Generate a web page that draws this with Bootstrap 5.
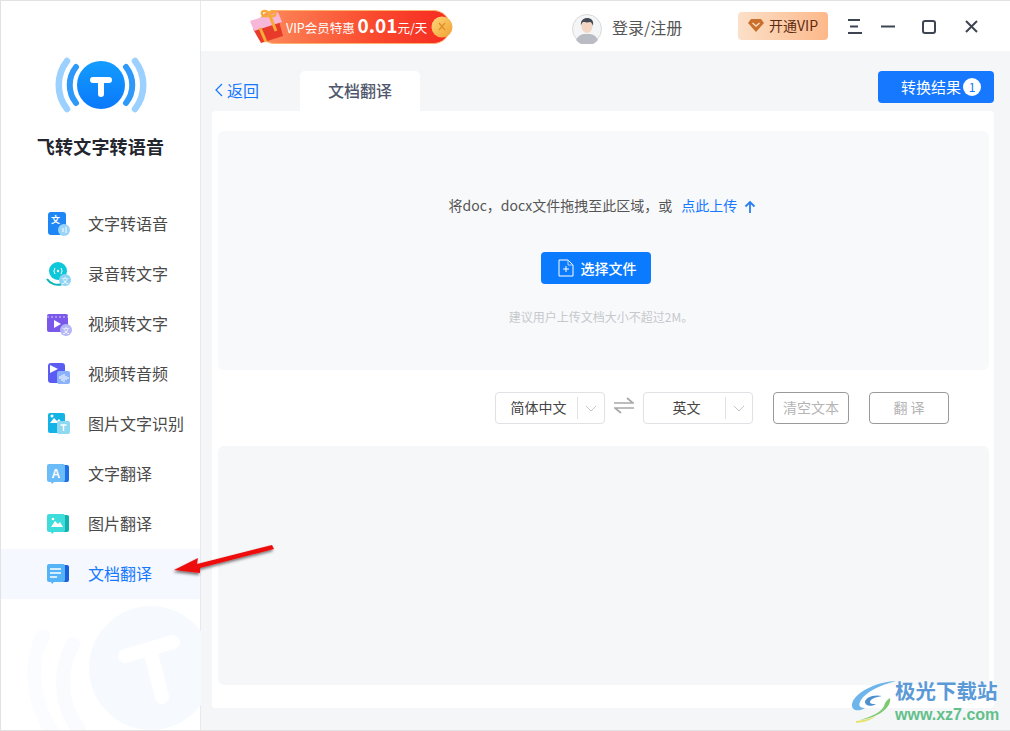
<!DOCTYPE html>
<html lang="zh-CN">
<head>
  <meta charset="UTF-8">
  <meta name="viewport" content="width=device-width, initial-scale=1.0">
  <title>飞转文字转语音</title>
  <link href="https://cdn.jsdelivr.net/npm/bootstrap@5.3.0/dist/css/bootstrap.min.css" rel="stylesheet">
  <style>
    html, body { height: 100%; overflow: hidden; }
    body { font-family: "Noto Sans CJK SC", "Noto Sans", sans-serif; background: #f5f6f8; color: #444; }
    .app-shell { height: 731px; border: 1px solid #e2e2e2; border-right: 0; position: relative; overflow: hidden; }
    .side-bar { width: 200px; flex: none; background: #fff; border-right: 1px solid #e8e9ec; position: relative; }
    .side-logo { padding-top: 57px; height: 198px; }
    .side-title { font-size: 18px; font-weight: 700; color: #23262e; line-height: 26px; margin-top: 19px; letter-spacing: .2px; }
    .side-item { height: 50px; padding: 0 0 2px 45px; font-size: 16px; color: #4a4a4a; gap: 16px; position: relative; z-index: 1; }
    .side-item svg { margin-top: 2px; }
    .side-item.on { background: #f5f9ff; color: #1677ff; }
    .side-mark { position: absolute; left: 0; bottom: 0; }
    .main-area { min-width: 0; }
    .top-bar { height: 50px; background: #fff; position: relative; }
    .promo-pill { position: absolute; left: 49px; top: 7px; }
    .promo-text { font-size: 12.5px; line-height: 25px; color: #fff; }
    .promo-text b { font-size: 19px; font-weight: 700; }
    .user-pic { position: absolute; left: 371px; top: 13px; }
    .login-txt { position: absolute; left: 411px; top: 13px; font-size: 16px; line-height: 26px; color: #555; }
    .vip-btn { position: absolute; left: 537px; top: 11px; width: 90px; height: 28px; padding-bottom: 2px; border-radius: 4px; background: linear-gradient(90deg, #fbe0c8, #fdb88a); color: #5e2a10; font-size: 14px; gap: 5px; }
    .win-btns { position: absolute; left: 646px; top: 16px; }
    .work-area { padding: 20px 16px 22px 11px; }
    .back-link { width: 88px; color: #1677ff; font-size: 16px; padding: 0 0 2px 3px; height: 40px; gap: 4px; text-decoration: none; }
    .tab-on { width: 120px; height: 40px; padding-bottom: 2px; background: #fff; border-radius: 5px 5px 0 0; font-size: 16px; font-weight: 500; color: #50566b; }
    .result-btn { width: 116px; height: 32px; background: #1677ff; border: 0; border-radius: 4px; color: #fff; font-size: 15px; padding: 0 13px 0 23px; }
    .num-dot { width: 18px; height: 18px; border-radius: 50%; background: #fff; color: #1677ff; font-size: 12px; line-height: 18px; text-align: center; }
    .work-panel { background: #fff; border-radius: 4px; padding: 20px 5px 23px 6px; height: 597px; }
    .drop-box { height: 239px; background: #f8f9fb; border-radius: 6px; padding-top: 62px; }
    .drop-line { font-size: 14px; line-height: 24px; color: #555; margin-left: -2px; }
    .drop-line a { color: #1677ff; text-decoration: none; margin-left: 6px; }
    .pick-btn { width: 110px; height: 32px; background: #0a7bff; border: 0; border-radius: 4px; color: #fff; font-size: 14px; font-weight: 500; margin: 35px 16px 0 0; gap: 7px; padding: 0 0 0 3px; }
    .hint-line { font-size: 12px; line-height: 20px; color: #c6c8cc; margin: 23px 5px 0 0; }
    .ctrl-row { height: 76px; padding-right: 40px; }
    .pick-sel { width: 110px; height: 32px; padding-bottom: 2px; border: 1px solid #dfe1e5; border-radius: 4px; font-size: 14px; color: #444; background: #fff; }
    .pick-sel span { flex: 1; text-align: center; padding-left: 4px; }
    .pick-sel i { width: 27px; height: 22px; margin-top: 2px; border-left: 1px solid #dfe1e5; display: flex; align-items: center; justify-content: center; }
    .ghost-btn { height: 32px; border: 1px solid #9a9a9a; border-radius: 4px; background: #fff; color: #b4b4b4; font-size: 14px; padding: 0 0 2px; margin-left: 20px; }
    .btn-clear { width: 76px; }
    .btn-trans { width: 80px; }
    .swap-ico { margin: 0 9px 4px; }
    .out-box { height: 239px; background: #f6f7f9; border-radius: 6px; }
    .red-arrow { position: absolute; left: 0; top: -1px; pointer-events: none; z-index: 5; }
    .wm-box { position: absolute; left: 849px; top: 678px; z-index: 4; }
    .wm-name { position: absolute; left: 45px; top: -3px; font-size: 20.5px; line-height: 28px; font-weight: 700; color: #5b9ad6; white-space: nowrap; }
    .wm-url { position: absolute; left: 45px; top: 26px; font-family: "Liberation Sans", sans-serif; font-size: 16px; line-height: 20px; font-weight: 700; color: #62c08a; white-space: nowrap; }
  </style>
</head>
<body>
  <div class="app-shell d-flex">
    <!-- sidebar -->
    <div class="side-bar">
      <svg class="side-mark" width="200" height="135" viewBox="0 596 200 135">
        <circle cx="150" cy="669" r="62" fill="#f6f9fe"/>
        <path d="M72 645c-16 30-12 62 6 86" fill="none" stroke="#f9fbff" stroke-width="14" stroke-linecap="round"/>
        <path d="M42 637c-16 30-8 70 8 94" fill="none" stroke="#fbfcff" stroke-width="14" stroke-linecap="round"/>
        <path d="M124 657l48-14M149 651l12 47" fill="none" stroke="#fff" stroke-width="14" stroke-linecap="round"/>
      </svg>
      <div class="side-logo text-center">
        <svg width="90" height="56" viewBox="0 0 90 56" class="d-block mx-auto" style="overflow:visible">
          <defs><linearGradient id="lg1" x1="0" y1="0" x2="0" y2="1"><stop offset="0" stop-color="#139dfe"/><stop offset="1" stop-color="#0a78fb"/></linearGradient></defs>
          <circle cx="45" cy="27" r="24" fill="url(#lg1)"/>
          <path d="M37 22h16M45 22v14" fill="none" stroke="#fff" stroke-width="6" stroke-linecap="round"/>
          <path d="M20 9A29 29 0 0 0 20 45M70 9A29 29 0 0 1 70 45" fill="none" stroke="#2e99f8" stroke-width="6" stroke-linecap="round"/>
          <path d="M11 3A39 39 0 0 0 11 51M79 3A39 39 0 0 1 79 51" fill="none" stroke="#9bd0ff" stroke-width="6.500" stroke-linecap="round"/>
        </svg>
        <div class="side-title">飞转文字转语音</div>
      </div>

      <div class="side-item d-flex align-items-center">
        <svg width="26" height="26" viewBox="0 0 26 26"><rect x="2" y="1" width="18" height="23" rx="3" fill="#1f87f5"/><text x="5" y="12" font-size="9" font-weight="700" fill="#fff">文</text><circle cx="18" cy="19" r="6" fill="#9ad4fb"/><path d="M17 17v4M20 16v6" stroke="#fff" stroke-width="1"/></svg>
        <span>文字转语音</span>
      </div>
      <div class="side-item d-flex align-items-center">
        <svg width="26" height="26" viewBox="0 0 26 26"><path d="M1 18c3 5 10 7 15 5" fill="none" stroke="#0cb4b8" stroke-width="2"/><circle cx="12" cy="10" r="9" fill="#0cc8d8"/><path d="M9 7a5 5 0 0 0 0 6M15 7a5 5 0 0 1 0 6" fill="none" stroke="#fff"/><circle cx="12" cy="10" r="1.200" fill="#fff"/><circle cx="19" cy="19" r="6" fill="#8fd3f4"/><text x="15.500" y="22" font-size="7" fill="#fff">文</text></svg>
        <span>录音转文字</span>
      </div>
      <div class="side-item d-flex align-items-center">
        <svg width="26" height="26" viewBox="0 0 26 26"><rect x="1" y="3" width="21" height="18" rx="2" fill="#7a58ea"/><path d="M1 6h21" stroke="#a892f4" stroke-width="2" stroke-dasharray="2 2"/><path d="M8 9l7 4-7 4z" fill="#fff"/><circle cx="20" cy="19" r="6" fill="#b3b6f7"/><text x="16.500" y="22" font-size="7" fill="#fff">文</text></svg>
        <span>视频转文字</span>
      </div>
      <div class="side-item d-flex align-items-center">
        <svg width="26" height="26" viewBox="0 0 26 26"><rect x="2" y="2" width="17" height="20" rx="3" fill="#5a5cf2"/><path d="M4 4l8 4-8 4z" fill="#fff"/><rect x="11" y="10" width="13" height="13" rx="2" fill="#8cb2fb"/><path d="M14 15v3M16 14v6M18 13v8M20 15v4M22 16v2" stroke="#fff"/></svg>
        <span>视频转音频</span>
      </div>
      <div class="side-item d-flex align-items-center">
        <svg width="26" height="26" viewBox="0 0 26 26"><rect x="2" y="2" width="17" height="20" rx="2" fill="#13b3e6"/><path d="M4 12l4-5 3 3 2-2 3 4z" fill="#fff"/><circle cx="6" cy="5" r="1.500" fill="#fff"/><rect x="11" y="10" width="13" height="13" rx="2" fill="#8fd8f2"/><path d="M14.500 14h6M17.500 14v6" stroke="#fff" stroke-width="1.400"/></svg>
        <span>图片文字识别</span>
      </div>
      <div class="side-item d-flex align-items-center">
        <svg width="26" height="26" viewBox="0 0 26 26"><rect x="8" y="4" width="15" height="17" rx="2" fill="#1f6fe8"/><path d="M3 3h14a2 2 0 0 1 2 2v14a2 2 0 0 1-2 2H8l-2 2-1-2H3a2 2 0 0 1-2-2V5a2 2 0 0 1 2-2z" fill="#6cbcf8"/><text x="5.500" y="17" font-size="12" font-weight="700" fill="#fff" font-family="Liberation Sans">A</text></svg>
        <span>文字翻译</span>
      </div>
      <div class="side-item d-flex align-items-center">
        <svg width="26" height="26" viewBox="0 0 26 26"><rect x="8" y="4" width="15" height="17" rx="2" fill="#12b1b0"/><path d="M3 3h14a2 2 0 0 1 2 2v14a2 2 0 0 1-2 2H8l-2 2-1-2H3a2 2 0 0 1-2-2V5a2 2 0 0 1 2-2z" fill="#3fdcdc"/><path d="M5 16l4-6 3 3 2-2 3 5z" fill="#fff"/><circle cx="7" cy="8" r="1.300" fill="#fff"/></svg>
        <span>图片翻译</span>
      </div>
      <div class="side-item on d-flex align-items-center">
        <svg width="26" height="26" viewBox="0 0 26 26"><rect x="8" y="4" width="15" height="17" rx="2" fill="#1a5fdc"/><path d="M3 3h14a2 2 0 0 1 2 2v14a2 2 0 0 1-2 2H8l-2 2-1-2H3a2 2 0 0 1-2-2V5a2 2 0 0 1 2-2z" fill="#55b4f8"/><path d="M4 8h11M4 12h11M4 16h7" stroke="#fff" stroke-width="1.500"/></svg>
        <span>文档翻译</span>
      </div>
    </div>

    <!-- main -->
    <div class="main-area flex-grow-1 d-flex flex-column">
      <div class="top-bar">
        <svg class="promo-pill" width="204" height="38" viewBox="0 0 204 38">
          <defs>
            <linearGradient id="lg2" x1="0" y1="0" x2="1" y2="0"><stop offset="0" stop-color="#fd8c5c"/><stop offset=".6" stop-color="#fa4a2e"/><stop offset="1" stop-color="#f62a22"/></linearGradient>
            <linearGradient id="lg3" x1="0" y1="0" x2="1" y2="1"><stop offset="0" stop-color="#ffd77c"/><stop offset="1" stop-color="#f0a030"/></linearGradient>
          </defs>
          <rect x="8" y="2.500" width="192" height="33" rx="16.500" fill="url(#lg2)" stroke="#fbb46c"/>
          <path d="M3 21l26-8 4 15-22 7z" fill="#e83a2a"/>
          <path d="M0 13l28-9 4 10-28 9z" fill="#f7b7d8"/>
          <path d="M10 20l6 14M20 8l6 15" stroke="#f7a93a" stroke-width="3"/>
          <path d="M13 8c-5-6 6-7 6-1 1-6 10-4 5 1z" fill="none" stroke="#f7a93a" stroke-width="2.500"/>
          <circle cx="192" cy="19" r="10.500" fill="url(#lg3)"/>
          <path d="M189 15l6 7M195 15l-6 7" stroke="#dc8e22" stroke-width="1.200"/>
          <foreignObject x="36" y="4" width="148" height="28">
            <div xmlns="http://www.w3.org/1999/xhtml" class="promo-text text-nowrap">VIP会员特惠 <b>0.01</b>元/天</div>
          </foreignObject>
        </svg>
        <svg class="user-pic" width="30" height="30" viewBox="0 0 30 30">
          <circle cx="15" cy="15" r="14.500" fill="#f4f5f6" stroke="#d8d8d8"/>
          <path d="M4 26c3-6 7-6 11-6s8 0 11 6a14 14 0 0 1-22 0z" fill="#b9bdc3"/>
          <ellipse cx="15" cy="12" rx="5.500" ry="7" fill="#f3d6c4"/>
          <path d="M9 12c-1-7 4-8 6-8 4 0 7 2 6 8-1-3-2-4-3-4-3 1-6 0-7 0-1 1-2 2-2 4z" fill="#454b55"/>
        </svg>
        <div class="login-txt">登录/注册</div>
        <div class="vip-btn d-flex align-items-center justify-content-center">
          <svg width="16" height="14" viewBox="0 0 16 14"><path d="M3 1h10l3 4-8 9-8-9z" fill="#c8702c"/><path d="M4.500 5L8 8l3.500-3" fill="none" stroke="#fbdcc0" stroke-width="1.500"/></svg>
          <span>开通VIP</span>
        </div>
        <div class="win-btns d-flex">
          <svg width="136" height="20" viewBox="0 0 136 20">
            <g fill="none" stroke="#3d4452" stroke-width="2">
              <path d="M1 3h12M3 9.500h8M1 16h14"/>
              <path d="M34 9.500h14"/>
              <rect x="76" y="4" width="12" height="12" rx="2"/>
              <path d="M119 4l11 11M130 4l-11 11"/>
            </g>
          </svg>
        </div>
      </div>

      <div class="work-area flex-grow-1">
        <div class="d-flex align-items-start">
          <a class="back-link d-flex align-items-center" href="#">
            <svg width="8" height="14" viewBox="0 0 8 14"><path d="M7 1L1 7l6 6" fill="none" stroke="#1677ff" stroke-width="1.200"/></svg>
            <span>返回</span>
          </a>
          <div class="tab-on d-flex align-items-center justify-content-center">文档翻译</div>
          <button class="result-btn ms-auto d-flex align-items-center justify-content-between">
            <span>转换结果</span><span class="num-dot">1</span>
          </button>
        </div>

        <div class="work-panel">
          <div class="drop-box text-center">
            <div class="drop-line">将doc，docx文件拖拽至此区域，或 <a href="#">点此上传</a>
              <svg width="12" height="14" viewBox="0 0 12 14" class="ms-1"><path d="M6 13V2M1.500 6.500L6 2l4.500 4.500" fill="none" stroke="#2b7ff0" stroke-width="1.800"/></svg>
            </div>
            <button class="pick-btn d-inline-flex align-items-center justify-content-center">
              <svg width="16" height="18" viewBox="0 0 16 18"><path d="M1 1h9l5 5v11H1z" fill="none" stroke="#fff"/><path d="M10 1v5h5" fill="none" stroke="#b9d8ff"/><path d="M5 10h6M8 7v6" stroke="#fff"/></svg>
              <span>选择文件</span>
            </button>
            <div class="hint-line">建议用户上传文档大小不超过2M。</div>
          </div>

          <div class="ctrl-row d-flex align-items-center justify-content-end">
            <div class="pick-sel d-flex align-items-center"><span>简体中文</span><i><svg width="12" height="7" viewBox="0 0 12 7"><path d="M1 1l5 5 5-5" fill="none" stroke="#c4c6ca"/></svg></i></div>
            <svg class="swap-ico" width="20" height="18" viewBox="0 0 20 18"><path d="M0 6h19L13 1M20 11H1l6 5" fill="none" stroke="#a8a8a8" stroke-width="1.700"/></svg>
            <div class="pick-sel d-flex align-items-center"><span>英文</span><i><svg width="12" height="7" viewBox="0 0 12 7"><path d="M1 1l5 5 5-5" fill="none" stroke="#c4c6ca"/></svg></i></div>
            <button class="ghost-btn btn-clear">清空文本</button>
            <button class="ghost-btn btn-trans">翻 译</button>
          </div>

          <div class="out-box"></div>
        </div>
      </div>
    </div>

    <!-- annotation arrow -->
    <svg class="red-arrow" width="1010" height="731" viewBox="0 0 1010 731">
      <defs><filter id="sh1" x="-20%" y="-50%" width="140%" height="220%"><feDropShadow dx="-1" dy="2" stdDeviation="1.500" flood-color="#000" flood-opacity=".55"/></filter></defs>
      <path d="M173 570L197 558l-1 6 75-19 2 4-74 19 0 5z" fill="#ee1111" filter="url(#sh1)"/>
    </svg>

    <!-- site watermark -->
    <div class="wm-box">
      <svg width="50" height="46" viewBox="0 0 50 46">
        <path d="M46 2C26 3 5 13 2 25c-1 7 7 8 13 4-6 0-7-3-4-8C16 13 30 6 46 2z" fill="#6db5ea"/>
        <path d="M32 17c-9-2-17 2-17 6 0 4 7 5 11 2-3 0-6 0-6-2 0-3 6-5 12-6z" fill="#4e8fcf"/>
        <path d="M40 19c2 9-12 20-30 22 16-5 22-9 24-14 1-4 3-6 6-8z" fill="#7cc96f"/>
        <path d="M6 42c8-1 14-2 20-5-6 5-12 6-20 7z" fill="#e5e26c"/>
      </svg>
      <div class="wm-name">极光下载站</div>
      <div class="wm-url">www.xz7.com</div>
    </div>
  </div>
  <script src="https://cdn.jsdelivr.net/npm/bootstrap@5.3.0/dist/js/bootstrap.bundle.min.js"></script>
</body>
</html>
